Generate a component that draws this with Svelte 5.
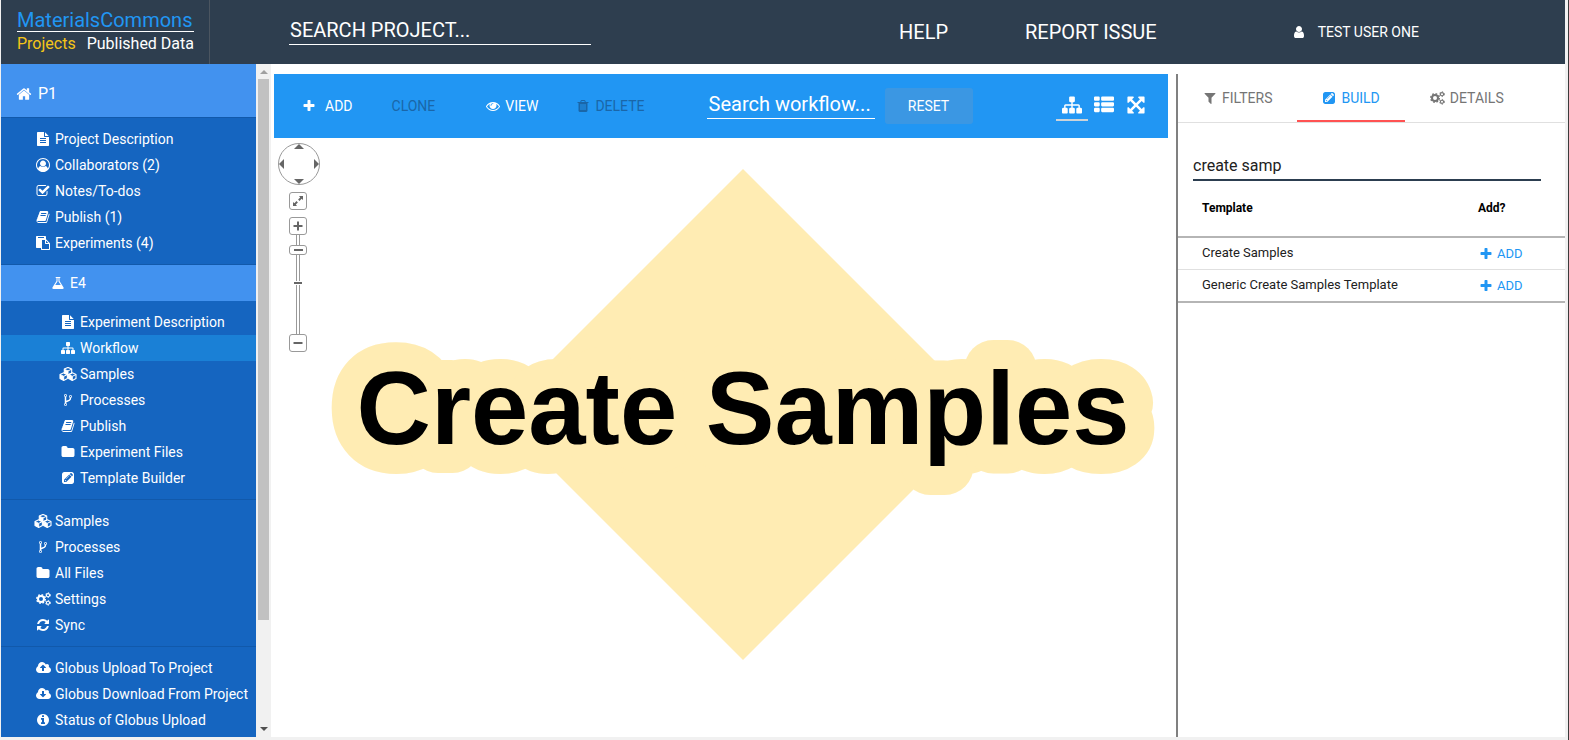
<script>
  const icons = {
    home: 'M1472 992v480q0 26-19 45t-45 19h-384v-384h-256v384h-384q-26 0-45-19t-19-45v-480q0-1 .5-3t.5-3l575-474 575 474q1 2 1 6zm223-69l-62 74q-8 9-21 11h-3q-13 0-21-7l-692-577-692 577q-12 8-24 7-13-2-21-11l-62-74q-8-10-7-23.5t11-21.5l719-599q32-26 76-26t76 26l244 204v-195q0-14 9-23t23-9h192q14 0 23 9t9 23v408l219 182q10 8 11 21.5t-7 23.5z',
    fileText: 'M1596 476q14 14 28 36h-472v-472q22 14 36 28zm-476 164h544v1056q0 40-28 68t-68 28h-1344q-40 0-68-28t-28-68v-1600q0-40 28-68t68-28h800v544q0 40 28 68t68 28zm160 736v-64q0-14-9-23t-23-9h-704q-14 0-23 9t-9 23v64q0 14 9 23t23 9h704q14 0 23-9t9-23zm0-256v-64q0-14-9-23t-23-9h-704q-14 0-23 9t-9 23v64q0 14 9 23t23 9h704q14 0 23-9t9-23zm0-256v-64q0-14-9-23t-23-9h-704q-14 0-23 9t-9 23v64q0 14 9 23t23 9h704q14 0 23-9t9-23z',
    userCircle: 'M896 0q182 0 348 71t286 191 191 286 71 348q0 181-70.5 347t-190.5 286-286 191.5-349 71.5-349-71-285.5-191.5-190.5-286-71-347.5 71-348 191-286 286-191 348-71zm619 1351q149-205 149-455 0-156-61-298t-164-245-245-164-298-61-298 61-245 164-164 245-61 298q0 250 149 455 66-327 306-327 131 128 313 128t313-128q240 0 306 327zm-235-647q0-159-112.5-271.5t-271.5-112.5-271.5 112.5-112.5 271.5 112.5 271.5 271.5 112.5 271.5-112.5 112.5-271.5z',
    checkSquare: 'M1472 930v318q0 119-84.5 203.5t-203.5 84.5h-832q-119 0-203.5-84.5t-84.5-203.5v-832q0-119 84.5-203.5t203.5-84.5h832q63 0 117 25 15 7 18 23 3 17-9 29l-49 49q-10 10-23 10-3 0-9-2-23-6-45-6h-832q-66 0-113 47t-47 113v832q0 66 47 113t113 47h832q66 0 113-47t47-113v-254q0-13 9-22l64-64q10-10 23-10 6 0 12 3 20 8 20 29zm231-489l-814 814q-24 24-57 24t-57-24l-430-430q-24-24-24-57t24-57l110-110q24-24 57-24t57 24l263 263 647-647q24-24 57-24t57 24l110 110q24 24 24 57t-24 57z',
    book: 'M1703 478q40 57 18 129l-275 906q-19 64-76.5 107.5t-122.5 43.5h-923q-77 0-148.5-53.5t-99.5-131.5q-24-67-2-127 0-4 3-27t4-37q1-8-3-21.5t-3-19.5q2-11 8-21t16.5-23.5 16.5-23.5q23-38 45-91.5t30-91.5q3-10 .5-30t-.5-28q3-11 17-28t17-23q21-36 42-92t25-90q1-9-2.5-32t.5-28q4-13 22-30.5t22-22.5q19-26 42.5-84.5t27.5-96.5q1-8-3-25.5t-2-26.5q2-8 9-18t18-23 17-21q8-12 16.5-30.5t15-35 16-36 19.5-32 26.5-23.5 36-11.5 47.5 5.5l-1 3q38-9 51-9h761q74 0 114 56t18 130l-274 906q-36 119-71.5 153.5t-128.5 34.5h-869q-27 0-38 15-11 16-1 43 24 70 144 70h923q29 0 56-15.5t35-41.5l300-987q7-22 5-57 38 15 59 43zm-1064 2q-4 13 2 22.5t20 9.5h608q13 0 25.5-9.5t16.5-22.5l21-64q4-13-2-22.5t-20-9.5h-608q-13 0-25.5 9.5t-16.5 22.5zm-83 256q-4 13 2 22.5t20 9.5h608q13 0 25.5-9.5t16.5-22.5l21-64q4-13-2-22.5t-20-9.5h-608q-13 0-25.5 9.5t-16.5 22.5z',
    paste: 'M768 1664h896v-640h-416q-40 0-68-28t-28-68v-416h-384v1152zm256-1440v-64q0-13-9.5-22.5t-22.5-9.5h-704q-13 0-22.5 9.5t-9.5 22.5v64q0 13 9.5 22.5t22.5 9.5h704q13 0 22.5-9.5t9.5-22.5zm256 672h299l-299-299v299zm512 128v672q0 40-28 68t-68 28h-960q-40 0-68-28t-28-68v-160h-544q-40 0-68-28t-28-68v-1344q0-40 28-68t68-28h1088q40 0 68 28t28 68v328q21 13 36 28l408 408q28 28 48 76t20 88z',
    flask: 'M1591 1448q56 89 21.5 152.5t-140.5 63.5h-1152q-106 0-140.5-63.5t21.5-152.5l503-793v-399h-64q-26 0-45-19t-19-45 19-45 45-19h512q26 0 45 19t19 45-19 45-45 19h-64v399zm-779-725l-272 429h712l-272-429-20-31v-436h-128v436z',
    sitemap: 'M1792 1248v320q0 40-28 68t-68 28h-320q-40 0-68-28t-28-68v-320q0-40 28-68t68-28h96v-192h-512v192h96q40 0 68 28t28 68v320q0 40-28 68t-68 28h-320q-40 0-68-28t-28-68v-320q0-40 28-68t68-28h96v-192h-512v192h96q40 0 68 28t28 68v320q0 40-28 68t-68 28h-320q-40 0-68-28t-28-68v-320q0-40 28-68t68-28h96v-192q0-52 38-90t90-38h512v-192h-96q-40 0-68-28t-28-68v-320q0-40 28-68t68-28h320q40 0 68 28t28 68v320q0 40-28 68t-68 28h-96v192h512q52 0 90 38t38 90v192h96q40 0 68 28t28 68z',
    fork: 'M672 1472q0-40-28-68t-68-28-68 28-28 68 28 68 68 28 68-28 28-68zm0-1152q0-40-28-68t-68-28-68 28-28 68 28 68 68 28 68-28 28-68zm640 128q0-40-28-68t-68-28-68 28-28 68 28 68 68 28 68-28 28-68zm96 0q0 52-26 96.5t-70 69.5q-2 287-226 414-67 38-203 81-128 40-169.5 71t-41.5 100v26q44 25 70 69.5t26 96.5q0 80-56 136t-136 56-136-56-56-136q0-52 26-96.5t70-69.5v-820q-44-25-70-69.5t-26-96.5q0-80 56-136t136-56 136 56 56 136q0 52-26 96.5t-70 69.5v497q54-26 154-57 55-17 87.5-29.5t70.5-31 59-39.5 40.5-51 28-69.5 8.5-91.5q-44-25-70-69.5t-26-96.5q0-80 56-136t136-56 136 56 56 136z',
    folder: 'M1728 608v704q0 92-66 158t-158 66h-1216q-92 0-158-66t-66-158v-960q0-92 66-158t158-66h320q92 0 158 66t66 158v32h672q92 0 158 66t66 158z',
    pencil: 'M416 128h960q119 0 203.5 84.5t84.5 203.5v960q0 119-84.5 203.5t-203.5 84.5h-960q-119 0-203.5-84.5t-84.5-203.5v-960q0-119 84.5-203.5t203.5-84.5zm-32 1280h288l672-672-288-288-672 672zm672-832l32 32-448 448-32-32zm352 96l92-92q28-28 28-68t-28-68l-152-152q-28-28-68-28t-68 28l-92 92zm-896 480h96v96h96l-64 64h-64l-96-96v-32z',
    refresh: 'M1639 1056q0 5-1 7-64 268-268 434.5t-478 166.5q-146 0-282.5-55t-243.5-157l-129 129q-19 19-45 19t-45-19-19-45v-448q0-26 19-45t45-19h448q26 0 45 19t19 45-19 45l-137 137q71 66 161 102t187 36q134 0 250-65t186-179q11-17 53-117 8-23 30-23h192q13 0 22.5 9.5t9.5 22.5zm25-800v448q0 26-19 45t-45 19h-448q-26 0-45-19t-19-45 19-45l138-138q-148-137-349-137-134 0-250 65t-186 179q-11 17-53 117-8 23-30 23h-199q-13 0-22.5-9.5t-9.5-22.5v-7q65-268 270-434.5t480-166.5q146 0 284 55.5t245 156.5l130-129q19-19 45-19t45 19 19 45z',
    cloudUp: 'M1216 864q0-14-9-23l-352-352q-9-9-23-9t-23 9l-351 351q-10 12-10 24 0 14 9 23t23 9h224v352q0 13 9.5 22.5t22.5 9.5h192q13 0 22.5-9.5t9.5-22.5v-352h224q13 0 22.5-9.5t9.5-22.5zm640 288q0 159-112.5 271.5t-271.5 112.5h-1088q-185 0-316.5-131.5t-131.5-316.5q0-130 70-240t188-165q-2-30-2-43 0-212 150-362t362-150q156 0 285.5 87t188.5 231q71-62 166-62 106 0 181 75t75 181q0 76-41 138 130 31 213.5 135.5t83.5 238.5z',
    cloudDown: 'M1216 928q0-14-9-23t-23-9h-224v-352q0-13-9.5-22.5t-22.5-9.5h-192q-13 0-22.5 9.5t-9.5 22.5v352h-224q-13 0-22.5 9.5t-9.5 22.5q0 14 9 23l352 352q9 9 23 9t23-9l351-351q10-12 10-24zm640 224q0 159-112.5 271.5t-271.5 112.5h-1088q-185 0-316.5-131.5t-131.5-316.5q0-130 70-240t188-165q-2-30-2-43 0-212 150-362t362-150q156 0 285.5 87t188.5 231q71-62 166-62 106 0 181 75t75 181q0 76-41 138 130 31 213.5 135.5t83.5 238.5z',
    info: 'M1152 1376v-160q0-14-9-23t-23-9h-96v-512q0-14-9-23t-23-9h-320q-14 0-23 9t-9 23v160q0 14 9 23t23 9h96v320h-96q-14 0-23 9t-9 23v160q0 14 9 23t23 9h448q14 0 23-9t9-23zm-128-896v-160q0-14-9-23t-23-9h-192q-14 0-23 9t-9 23v160q0 14 9 23t23 9h192q14 0 23-9t9-23zm640 416q0 209-103 385.5t-279.5 279.5-385.5 103-385.5-103-279.5-279.5-103-385.5 103-385.5 279.5-279.5 385.5-103 385.5 103 279.5 279.5 103 385.5z',
    plus: 'M1600 736v192q0 40-28 68t-68 28h-416v416q0 40-28 68t-68 28h-192q-40 0-68-28t-28-68v-416h-416q-40 0-68-28t-28-68v-192q0-40 28-68t68-28h416v-416q0-40 28-68t68-28h192q40 0 68 28t28 68v416h416q40 0 68 28t28 68z',
    eye: 'M1664 960q-152-236-381-353 61 104 61 225 0 185-131.5 316.5t-316.5 131.5-316.5-131.5-131.5-316.5q0-121 61-225-229 117-381 353 133 205 333.5 326.5t434.5 121.5 434.5-121.5 333.5-326.5zm-720-384q0-20-14-34t-34-14q-125 0-214.5 89.5t-89.5 214.5q0 20 14 34t34 14 34-14 14-34q0-86 61-147t147-61q20 0 34-14t14-34zm848 384q0 34-20 69-140 230-376.5 368.5t-499.5 138.5-499.5-139-376.5-368q-20-35-20-69t20-69q140-229 376.5-368t499.5-139 499.5 139 376.5 368q20 35 20 69z',
    trash: 'M704 1376v-704q0-14-9-23t-23-9h-64q-14 0-23 9t-9 23v704q0 14 9 23t23 9h64q14 0 23-9t9-23zm256 0v-704q0-14-9-23t-23-9h-64q-14 0-23 9t-9 23v704q0 14 9 23t23 9h64q14 0 23-9t9-23zm256 0v-704q0-14-9-23t-23-9h-64q-14 0-23 9t-9 23v704q0 14 9 23t23 9h64q14 0 23-9t9-23zm-544-992h448l-48-117q-7-9-17-11h-317q-10 2-17 11zm928 32v64q0 14-9 23t-23 9h-96v948q0 83-47 143.5t-113 60.5h-832q-66 0-113-58.5t-47-141.5v-952h-96q-14 0-23-9t-9-23v-64q0-14 9-23t23-9h309l70-167q15-37 54-63t79-26h320q40 0 79 26t54 63l70 167h309q14 0 23 9t9 23z',
    list: 'M96 128h320q96 0 96 96v192q0 96-96 96h-320q-96 0-96-96v-192q0-96 96-96zm0 512h320q96 0 96 96v192q0 96-96 96h-320q-96 0-96-96v-192q0-96 96-96zm0 512h320q96 0 96 96v192q0 96-96 96h-320q-96 0-96-96v-192q0-96 96-96zm640-1024h960q96 0 96 96v192q0 96-96 96h-960q-96 0-96-96v-192q0-96 96-96zm0 512h960q96 0 96 96v192q0 96-96 96h-960q-96 0-96-96v-192q0-96 96-96zm0 512h960q96 0 96 96v192q0 96-96 96h-960q-96 0-96-96v-192q0-96 96-96z',
    arrows: 'M1411 541l-355 355 355 355 144-144q29-31 70-14 39 17 39 59v448q0 26-19 45t-45 19h-448q-42 0-59-40-17-39 14-69l144-144-355-355-355 355 144 144q31 30 14 69-17 40-59 40h-448q-26 0-45-19t-19-45v-448q0-42 40-59 39-17 69 14l144 144 355-355-355-355-144 144q-19 19-45 19-12 0-24-5-40-17-40-59v-448q0-26 19-45t45-19h448q42 0 59 40 17 39-14 69l-144 144 355 355 355-355-144-144q-31-30-14-69 17-40 59-40h448q26 0 45 19t19 45v448q0 42-39 59-13 5-25 5-26 0-45-19z',
    filter: 'M1595 295q17 41-14 70l-493 493v742q0 42-39 59-13 5-25 5-27 0-45-19l-256-256q-19-19-19-45v-486l-493-493q-31-29-14-70 17-39 59-39h1280q42 0 59 39z',
    user: 'M1536 1399q0 109-62.5 187t-150.5 78h-854q-88 0-150.5-78t-62.5-187q0-85 8.5-160.5t31.5-152 58.5-131 94-89 134.5-34.5q131 128 313 128t313-128q76 0 134.5 34.5t94 89 58.5 131 31.5 152 8.5 160.5zm-256-887q0 159-112.5 271.5t-271.5 112.5-271.5-112.5-112.5-271.5 112.5-271.5 271.5-112.5 271.5 112.5 112.5 271.5z'
  };

  const projectLinks = [
    ['fileText', 'Project Description'],
    ['userCircle', 'Collaborators (2)'],
    ['checkSquare', 'Notes/To-dos'],
    ['book', 'Publish (1)'],
    ['paste', 'Experiments (4)']
  ];
  const experimentLinks = [
    ['fileText', 'Experiment Description'],
    ['sitemap', 'Workflow'],
    ['cubes', 'Samples'],
    ['fork', 'Processes'],
    ['book', 'Publish'],
    ['folder', 'Experiment Files'],
    ['pencil', 'Template Builder']
  ];
  const dataLinks = [
    ['cubes', 'Samples'],
    ['fork', 'Processes'],
    ['folder', 'All Files'],
    ['cogs', 'Settings'],
    ['refresh', 'Sync']
  ];
  const globusLinks = [
    ['cloudUp', 'Globus Upload To Project'],
    ['cloudDown', 'Globus Download From Project'],
    ['info', 'Status of Globus Upload']
  ];
  const tabs = [
    ['filter', 'FILTERS'],
    ['pencil', 'BUILD'],
    ['cogs', 'DETAILS']
  ];
  const templates = ['Create Samples', 'Generic Create Samples Template'];

  let activeLink = $state('Workflow');
  let activeTab = $state('BUILD');
  let projectQuery = $state('');
  let workflowQuery = $state('');
  let templateQuery = $state('create samp');
  let zoom = $state(89);

  const matching = $derived(templates.filter((t) => t.toLowerCase().includes(templateQuery.toLowerCase())));
</script>

{#snippet cube(x, y)}
  <g transform="translate({x} {y})">
    <path d="M0-3.8 3.7-2.1V2L0 3.9-3.7 2V-2.1Z" fill="none" stroke="currentColor" stroke-width="1.1" stroke-linejoin="round" />
    <path d="M-3.7-1.9 0-.2V3.9L-3.7 2Z" fill="currentColor" />
    <path d="M-3.7-2 0-.3 3.7-2M0-.3V3.8" fill="none" stroke="currentColor" stroke-width="1" />
  </g>
{/snippet}

{#snippet icon(name, size = 14)}
  {#if name === 'cubes'}
    <svg width="18" height="14" viewBox="0 0 18 14" aria-hidden="true">
      {@render cube(9, 4.2)}
      {@render cube(4.7, 9.6)}
      {@render cube(13.3, 9.6)}
    </svg>
  {:else if name === 'cogs'}
    <svg width="15" height="14" viewBox="0 0 15 14" fill="none" stroke="currentColor" aria-hidden="true">
      <circle cx="5" cy="7" r="3" stroke-width="2" />
      <circle cx="5" cy="7" r="4.3" stroke-width="1.4" stroke-dasharray="1.7 1.677" />
      <circle cx="12" cy="3.2" r="1.6" stroke-width="1.1" />
      <circle cx="12" cy="3.2" r="2.4" stroke-width="1" stroke-dasharray="1.2 1.313" />
      <circle cx="12" cy="10.8" r="1.6" stroke-width="1.1" />
      <circle cx="12" cy="10.8" r="2.4" stroke-width="1" stroke-dasharray="1.2 1.313" />
    </svg>
  {:else if name === 'cloudUp' || name === 'cloudDown'}
    <svg width="15" height="14" viewBox="-64 0 1920 1792" fill="currentColor" aria-hidden="true"><path d={icons[name]} /></svg>
  {:else}
    <svg width={size} height={size} viewBox="0 0 1792 1792" fill="currentColor" fill-rule="evenodd" aria-hidden="true"><path d={icons[name]} /></svg>
  {/if}
{/snippet}

{#snippet links(items, nested = false)}
  <ul class:nested>
    {#each items as [glyph, label]}
      <li>
        <a
          href="#top"
          class:active={nested && label === activeLink}
          onclick={() => { if (nested) activeLink = label; }}
        >
          <span class="fw">{@render icon(glyph)}</span>{label}
        </a>
      </li>
    {/each}
  </ul>
{/snippet}

<div class="page">
  <header>
    <div class="brand">
      <a class="logo" href="#top">MaterialsCommons</a>
      <nav><a class="current" href="#top">Projects</a><a href="#top">Published Data</a></nav>
    </div>
    <input class="line-input project-search" aria-label="Search project" placeholder="SEARCH PROJECT..." bind:value={projectQuery} />
    <button class="head-btn help">HELP</button>
    <button class="head-btn">REPORT ISSUE</button>
    <button class="user">{@render icon('user')}TEST USER ONE</button>
  </header>

  <div class="body">
    <aside>
      <a class="project" href="#top">{@render icon('home', 16)}P1</a>
      {@render links(projectLinks)}
      <a class="experiment" href="#top">{@render icon('flask')}E4</a>
      {@render links(experimentLinks, true)}
      {@render links(dataLinks)}
      {@render links(globusLinks)}
    </aside>
    <div class="scrollbar">
      <span class="arrow up"></span>
      <span class="thumb"></span>
      <span class="arrow down"></span>
    </div>

    <main>
      <section class="workflow">
        <div class="toolbar">
          <button class="add">{@render icon('plus')}ADD</button>
          <button class="clone" disabled>CLONE</button>
          <button class="view">{@render icon('eye')}VIEW</button>
          <button class="delete" disabled>{@render icon('trash')}DELETE</button>
          <input class="line-input flow-search" aria-label="Search workflow" placeholder="Search workflow..." bind:value={workflowQuery} />
          <button class="reset" onclick={() => (workflowQuery = '')}>RESET</button>
          <div class="modes">
            <button class="selected" aria-label="Graph view">{@render icon('sitemap', 20)}</button>
            <button aria-label="List view">{@render icon('list', 20)}</button>
            <button aria-label="Full screen">{@render icon('arrows', 20)}</button>
          </div>
        </div>

        <div class="canvas">
          <svg class="graph" viewBox="0 0 894 599" role="img" aria-label="Workflow graph">
            <path d="M469 31 714.500 276.500 469 522 223.500 276.500Z" fill="#ffecb3" />
            <text x="469" y="306" text-anchor="middle">Create Samples</text>
          </svg>

          <div class="panzoom">
            <div class="pan">
              <button class="n" aria-label="Pan up"></button>
              <button class="w" aria-label="Pan left"></button>
              <button class="e" aria-label="Pan right"></button>
              <button class="s" aria-label="Pan down"></button>
            </div>
            <div class="zoomer">
              <button class="box fit" aria-label="Fit to view">
                <svg width="10" height="10" viewBox="0 0 10 10" aria-hidden="true">
                  <path d="M6 0h4v4L8.600 2.800 6.500 4.900 5.100 3.500 7.200 1.400ZM4 10H0V6l1.400 1.200L3.500 5.100 4.900 6.500 2.800 8.600Z" fill="#666" />
                </svg>
              </button>
              <button class="box" aria-label="Zoom in" onclick={() => (zoom = Math.min(100, zoom + 5))}>
                <svg width="10" height="10" viewBox="0 0 10 10" aria-hidden="true"><path d="M.5 4H4V.5h2V4h3.500v2H6v3.500H4V6H.5Z" fill="#666" /></svg>
              </button>
              <div class="slider">
                <input type="range" min="0" max="100" aria-label="Zoom" bind:value={zoom} />
              </div>
              <button class="box" aria-label="Zoom out" onclick={() => (zoom = Math.max(0, zoom - 5))}>
                <svg width="10" height="10" viewBox="0 0 10 10" aria-hidden="true"><path d="M.5 4h9v2h-9Z" fill="#666" /></svg>
              </button>
            </div>
          </div>
        </div>
      </section>

      <section class="panel">
        <div class="tabs" role="tablist">
          {#each tabs as [glyph, label]}
            <button role="tab" aria-selected={label === activeTab} onclick={() => (activeTab = label)}>
              {@render icon(glyph)}{label}
            </button>
          {/each}
        </div>
        <input class="template-search" aria-label="Filter templates" bind:value={templateQuery} />
        <table>
          <thead>
            <tr><th>Template</th><th class="add-col">Add?</th></tr>
          </thead>
          <tbody>
            {#each matching as name}
              <tr>
                <td>{name}</td>
                <td class="add-col"><button>{@render icon('plus')}ADD</button></td>
              </tr>
            {/each}
          </tbody>
        </table>
      </section>
    </main>
  </div>
</div>

<style>
  :global(body) {
    margin: 0;
    background: #f1f1f1;
  }

  .page {
    box-sizing: border-box;
    display: flex;
    flex-direction: column;
    height: 100vh;
    border: solid #f1f1f1;
    border-width: 0 3px 3px 1px;
    margin-right: 1px;
    box-shadow: 1px 0 #3c3c3c;
    background: #fff;
    font: 14px/20px Roboto, sans-serif;
    overflow: hidden;
  }

  a {
    color: inherit;
    text-decoration: none;
  }

  button,
  input {
    font: inherit;
    color: inherit;
    border: 0;
    padding: 0;
    background: none;
    outline: none;
  }

  button {
    display: flex;
    align-items: center;
    white-space: nowrap;
    cursor: pointer;
  }

  svg {
    display: block;
    flex: none;
  }

  header {
    display: flex;
    align-items: center;
    flex: none;
    height: 64px;
    background: #2e3e4f;
    color: #fff;
  }

  .brand {
    box-sizing: border-box;
    width: 209px;
    height: 64px;
    padding: 9px 15px 0 16px;
    border-right: 1px solid #4b5560;
  }

  .logo {
    display: block;
    border-bottom: 1px solid #fff;
    font-size: 20px;
    line-height: 22px;
    color: #2196f3;
  }

  .brand nav {
    display: flex;
    justify-content: space-between;
    font-size: 16px;
    line-height: 23px;
  }

  .brand .current {
    color: #f5c518;
  }

  .line-input {
    box-sizing: border-box;
    height: 30px;
    border-bottom: 1px solid #fff;
    padding: 0 2px;
    font-size: 20px;
    color: #fff;
  }

  .line-input::placeholder {
    color: #fff;
    opacity: 1;
  }

  .project-search {
    width: 302px;
    margin: 0 308px 4px 79px;
    padding: 0 1px;
  }

  .head-btn {
    margin-right: 135px;
    font-size: 20px;
  }

  .help {
    margin-right: 77px;
  }

  .user {
    gap: 12px;
  }

  .body {
    display: flex;
    flex: 1;
    min-height: 0;
  }

  aside {
    flex: none;
    width: 255px;
    overflow: hidden;
    background: #1565c0;
    color: #fff;
  }

  .project,
  .experiment {
    display: flex;
    align-items: center;
    background: #4292ef;
  }

  .project {
    box-sizing: border-box;
    height: 53px;
    padding: 6px 0 0 15px;
    gap: 6px;
    font-size: 16px;
  }

  .experiment {
    height: 36px;
    padding-left: 50px;
    gap: 5px;
  }

  ul {
    list-style: none;
    margin: 0;
    padding: 8px 0;
    border-top: 1px solid #1159ab;
  }

  .project + ul {
    border-bottom: 1px solid #1159ab;
  }

  ul.nested {
    border-top: 0;
  }

  li a {
    display: flex;
    align-items: center;
    gap: 3px;
    height: 26px;
    padding-left: 33px;
    white-space: nowrap;
  }

  .nested a {
    padding-left: 58px;
  }

  li a.active {
    background: #1a80d6;
  }

  .fw {
    display: flex;
    justify-content: center;
    width: 18px;
  }

  .scrollbar {
    display: flex;
    flex-direction: column;
    align-items: center;
    flex: none;
    width: 15px;
    background: #f1f1f1;
  }

  .scrollbar .thumb {
    flex: 541;
    width: 11px;
    background: #c1c1c1;
  }

  .arrow {
    height: 0;
    border: solid transparent;
    border-width: 0 4px;
  }

  .arrow.up {
    border-bottom: 4px solid #a0a0a0;
    margin: 6px 0 5px;
  }

  .arrow.down {
    border-top: 4px solid #505050;
    margin: 107px 0 6px;
  }

  main {
    display: grid;
    grid-template-columns: minmax(0, 1fr) 389px;
    flex: 1;
    min-width: 0;
    padding-top: 10px;
  }

  .workflow {
    display: flex;
    flex-direction: column;
    min-height: 0;
    padding: 0 8px 0 3px;
  }

  .toolbar {
    display: flex;
    align-items: center;
    flex: none;
    height: 64px;
    padding: 0 16px 0 28px;
    background: #2196f3;
    color: #fff;
  }

  .toolbar button:disabled {
    color: #1a66a8;
    cursor: default;
  }

  .add {
    gap: 9px;
    margin-right: 39px;
  }

  .clone {
    margin-right: 51px;
  }

  .view {
    gap: 5px;
    margin-right: 38px;
  }

  .delete {
    gap: 5px;
    margin-right: 62px;
  }

  .flow-search {
    width: 168px;
    margin: 0 10px 4px 0;
  }

  .reset {
    justify-content: center;
    width: 88px;
    height: 36px;
    border-radius: 3px;
    background: #3b97e3;
  }

  .modes {
    display: flex;
    margin-left: auto;
  }

  .modes button {
    justify-content: center;
    width: 32px;
    height: 30px;
    border-bottom: 2px solid transparent;
  }

  .modes .selected {
    border-color: #ccd3d8;
  }

  .canvas {
    position: relative;
    flex: 1;
    min-height: 0;
  }

  .graph {
    width: 100%;
    height: 100%;
  }

  .graph text {
    font: bold 103px 'Liberation Sans', Arial, sans-serif;
    fill: #000;
    stroke: #ffecb3;
    stroke-width: 58px;
    stroke-linejoin: round;
    paint-order: stroke;
  }

  .panzoom {
    position: absolute;
    top: 5px;
    left: 4px;
    width: 42px;
  }

  .pan {
    position: relative;
    box-sizing: border-box;
    height: 42px;
    margin-bottom: 7px;
    border: 1px solid #999;
    border-radius: 50%;
  }

  .zoomer {
    padding-left: 11px;
  }

  .pan button {
    position: absolute;
    border: solid transparent;
  }

  .pan .n {
    top: 0;
    left: 15px;
    border-width: 0 5px 5px;
    border-bottom-color: #666;
  }

  .pan .s {
    bottom: 0;
    left: 15px;
    border-width: 5px 5px 0;
    border-top-color: #666;
  }

  .pan .w {
    top: 15px;
    left: 0;
    border-width: 5px 5px 5px 0;
    border-right-color: #666;
  }

  .pan .e {
    top: 15px;
    right: 0;
    border-width: 5px 0 5px 5px;
    border-left-color: #666;
  }

  .box {
    box-sizing: border-box;
    justify-content: center;
    width: 18px;
    height: 18px;
    border: 1px solid #999;
    border-radius: 3px;
    background: #fff;
  }

  .fit {
    margin-bottom: 7px;
  }

  .slider {
    position: relative;
    height: 99px;
  }

  .slider::after {
    content: '';
    position: absolute;
    top: 46px;
    left: 5px;
    width: 8px;
    height: 2px;
    border: solid #fff;
    border-width: 1px 0;
    background: #666;
  }

  .slider input {
    display: block;
    width: 18px;
    height: 99px;
    margin: 0;
    appearance: none;
    writing-mode: vertical-lr;
    direction: rtl;
  }

  .slider input::-webkit-slider-runnable-track {
    box-sizing: border-box;
    width: 4px;
    height: 100%;
    border: solid #999;
    border-width: 0 1px;
  }

  .slider input::-webkit-slider-thumb {
    box-sizing: border-box;
    appearance: none;
    width: 18px;
    height: 10px;
    margin-left: -8px;
    border: 1px solid #999;
    border-radius: 3px;
    background: linear-gradient(#666, #666) center / 9px 2px no-repeat #fff;
  }

  .panel {
    min-width: 0;
    border-left: 2px solid #808080;
  }

  .tabs {
    display: flex;
    height: 48px;
    border-bottom: 1px solid #e0e0e0;
    color: #757575;
  }

  .tabs button {
    gap: 5px;
    padding: 2px 25px 0;
    border-bottom: 2px solid transparent;
  }

  .tabs [aria-selected='true'] {
    color: #2196f3;
    border-color: #ff5252;
  }

  .template-search {
    display: block;
    box-sizing: border-box;
    width: calc(100% - 39px);
    height: 30px;
    margin: 28px 0 0 15px;
    border-bottom: 2px solid #2c3e50;
    font-size: 16px;
    color: #212121;
  }

  table {
    width: 100%;
    border-collapse: separate;
    border-spacing: 0;
    border-bottom: 1px solid #b5b5b5;
    font-size: 13px;
    color: #212121;
  }

  th {
    height: 53px;
    padding: 0 0 2px 24px;
    border-bottom: 2px solid #b5b5b5;
    text-align: left;
    font-size: 12px;
    color: #000;
  }

  td {
    height: 29px;
    padding: 0 0 2px 24px;
    border-bottom: 1px solid #e0e0e0;
  }

  tr:last-child td {
    border-bottom-color: #b5b5b5;
  }

  th.add-col {
    width: 87px;
    padding-left: 0;
  }

  td.add-col {
    height: 31px;
    padding: 0;
  }

  td button {
    gap: 4px;
    padding-left: 1px;
    color: #2196f3;
  }
</style>
